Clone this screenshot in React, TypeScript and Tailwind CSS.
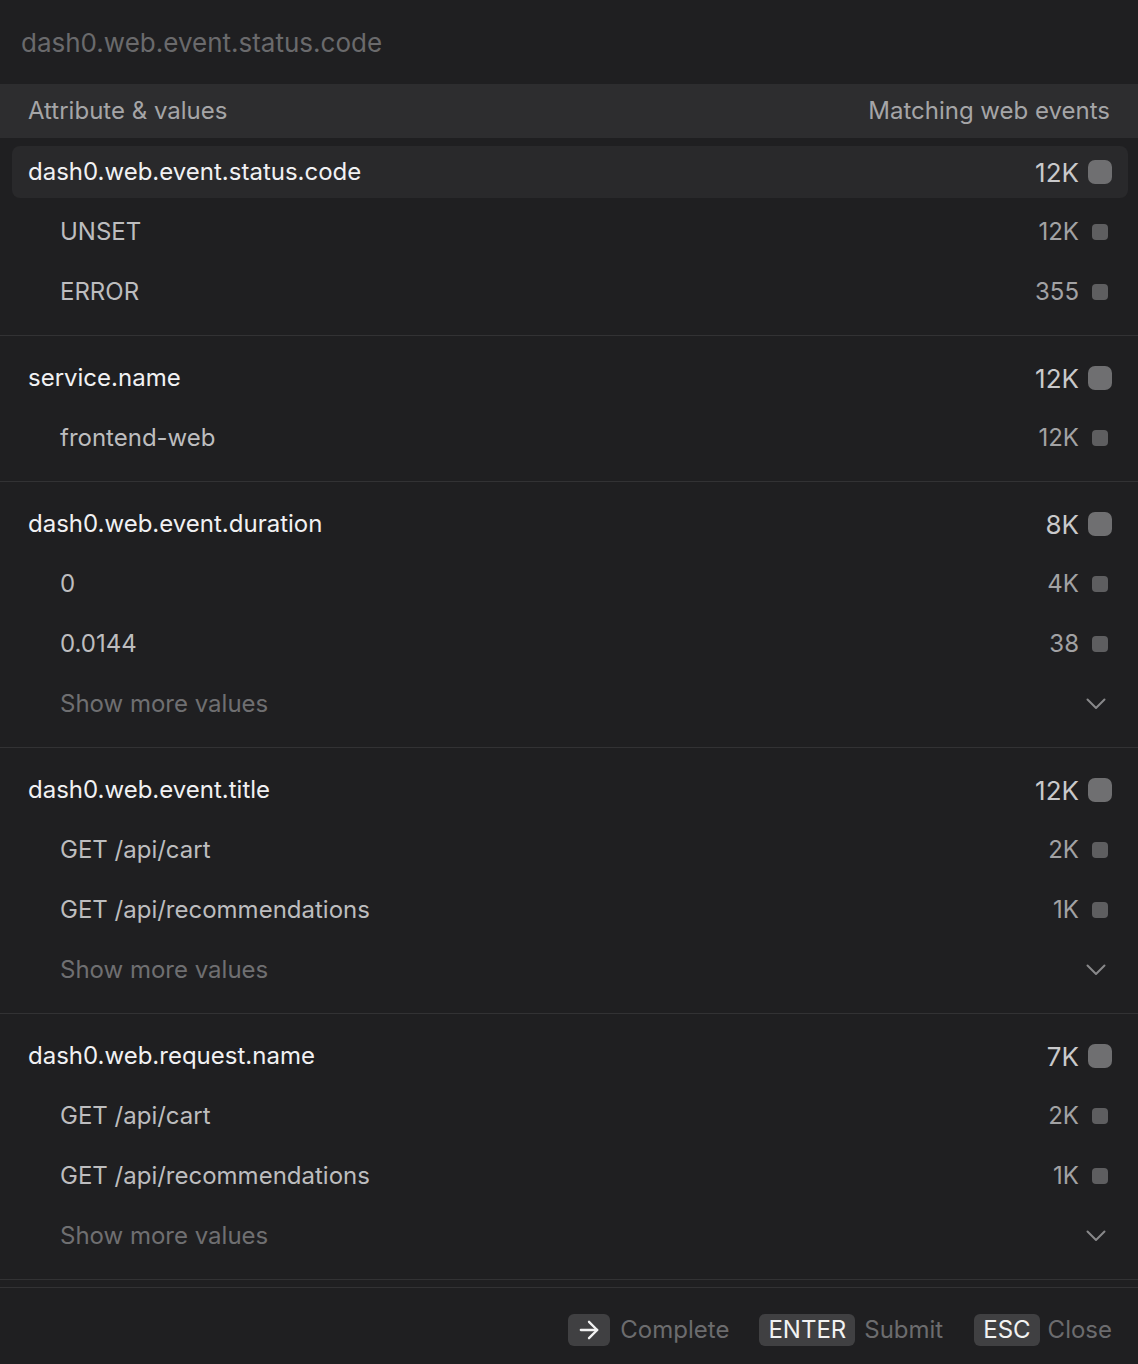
import { ArrowRight } from "lucide-react";

type Group = {
  name: string;
  count: string;
  values: { label: string; count: string }[];
  more?: boolean;
  active?: boolean;
};

const groups: Group[] = [
  {
    name: "dash0.web.event.status.code",
    count: "12K",
    active: true,
    values: [
      { label: "UNSET", count: "12K" },
      { label: "ERROR", count: "355" },
    ],
  },
  { name: "service.name", count: "12K", values: [{ label: "frontend-web", count: "12K" }] },
  {
    name: "dash0.web.event.duration",
    count: "8K",
    more: true,
    values: [
      { label: "0", count: "4K" },
      { label: "0.0144", count: "38" },
    ],
  },
  {
    name: "dash0.web.event.title",
    count: "12K",
    more: true,
    values: [
      { label: "GET /api/cart", count: "2K" },
      { label: "GET /api/recommendations", count: "1K" },
    ],
  },
  {
    name: "dash0.web.request.name",
    count: "7K",
    more: true,
    values: [
      { label: "GET /api/cart", count: "2K" },
      { label: "GET /api/recommendations", count: "1K" },
    ],
  },
];

function Row({ children, active, indent }: { children: React.ReactNode; active?: boolean; indent?: boolean }) {
  return (
    <div className="h-[60px] pl-[12px] pr-[10px] py-[4px]">
      <div
        className={`h-full rounded-[8px] pr-[16px] flex items-center justify-between ${indent ? "pl-[48px]" : "pl-[16px]"} ${active ? "bg-[#29292b]" : ""}`}
      >
        {children}
      </div>
    </div>
  );
}

function Count({ value, big }: { value: string; big?: boolean }) {
  return (
    <div className="flex items-center">
      <span className={big ? "text-[26px] text-[#c9c9cb]" : "text-[24px] text-[#a2a2a4]"}>{value}</span>
      {big ? (
        <span className="ml-[9px] block w-[24px] h-[24px] rounded-[7px] bg-[#6f6f71]" />
      ) : (
        <span className="ml-[13px] mr-[4px] block w-[16px] h-[16px] rounded-[4px] bg-[#5e5e60]" />
      )}
    </div>
  );
}

function Key({ children }: { children: React.ReactNode }) {
  return (
    <span className="h-[32px] px-[9px] rounded-[6px] bg-[#404042] text-[#f2f2f2] flex items-center">{children}</span>
  );
}

export default function App() {
  return (
    <div className="w-[1138px] h-[1364px] bg-[#1f1f21] flex flex-col overflow-hidden text-[24px] [font-family:Inter,'Noto_Sans',sans-serif]">
      <div className="h-[84px] shrink-0 px-[21px] flex items-center text-[26px] text-[#6a6a6c]">dash0.web.event.status.code</div>
      <div className="h-[54px] shrink-0 bg-[#2d2d2f] px-[28px] flex items-center justify-between text-[#a5a5a7]">
        <span>Attribute &amp; values</span>
        <span>Matching web events</span>
      </div>
      <div className="flex-1 overflow-hidden">
        {groups.map((g, i) => (
          <div key={i} className={`border-b border-[#323234] pb-[13px] ${i === 0 ? "pt-[4px]" : "pt-[12px]"}`}>
            <Row active={g.active}>
              <span className="text-[#f1f1f3]">{g.name}</span>
              <Count value={g.count} big />
            </Row>
            {g.values.map((v, j) => (
              <Row key={j} indent>
                <span className="text-[#bdbdbf]">{v.label}</span>
                <Count value={v.count} />
              </Row>
            ))}
            {g.more && (
              <Row indent>
                <span className="text-[#6f6f71]">Show more values</span>
                <svg width="20" height="12" viewBox="0 0 20 12" fill="none" className="mr-[6px]">
                  <polyline points="1.5,1.5 10,10 18.5,1.5" stroke="#88888a" strokeWidth="2" strokeLinecap="round" strokeLinejoin="round" />
                </svg>
              </Row>
            )}
          </div>
        ))}
      </div>
      <div className="h-[77px] shrink-0 border-t border-[#323234] pt-[8px] pl-[27px] pr-[26px] flex items-center justify-end text-[#6c6c6e]">
        <div className="flex items-center gap-[10px]">
          <span className="h-[32px] w-[42px] rounded-[6px] bg-[#404042] text-[#f2f2f2] flex items-center justify-center">
            <ArrowRight className="w-[28px] h-[28px]" strokeWidth={2} />
          </span>
          <span>Complete</span>
        </div>
        <div className="flex items-center gap-[9px] ml-[30px]">
          <Key>ENTER</Key>
          <span>Submit</span>
        </div>
        <div className="flex items-center gap-[8px] ml-[31px]">
          <Key>ESC</Key>
          <span>Close</span>
        </div>
      </div>
    </div>
  );
}
